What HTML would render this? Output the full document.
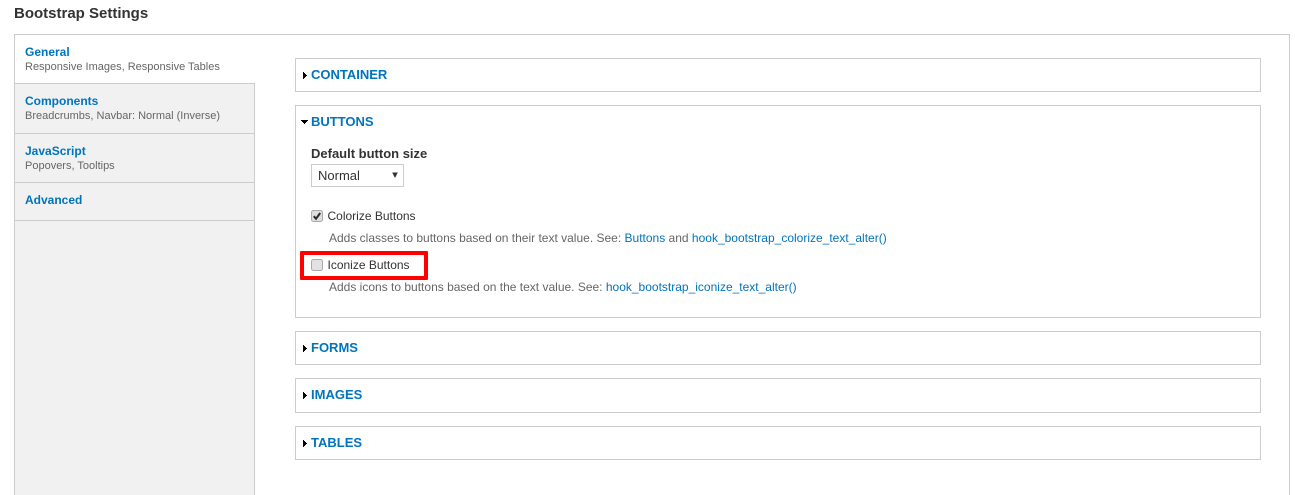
<!DOCTYPE html>
<html>
<head>
<meta charset="utf-8">
<style>
html,body{margin:0;padding:0;background:#fff;width:1295px;height:495px;overflow:hidden;}
#w{position:relative;width:1295px;height:495px;overflow:hidden;font-family:"Liberation Sans",sans-serif;color:#333;}
.a{position:absolute;white-space:nowrap;}
.box{position:absolute;box-sizing:border-box;border:1px solid #ccc;}
.l{color:#0074bd;text-decoration:none;}
.tt{font-size:12px;font-weight:bold;color:#0074bd;line-height:14px;left:25px;}
.ts{font-size:11px;color:#666;line-height:13px;left:25px;}
.div{position:absolute;left:15px;width:240px;height:1px;background:#ccc;}
.leg{font-size:13px;font-weight:bold;color:#0074bd;line-height:15px;left:311px;}
.d{font-size:12px;color:#666;line-height:14px;left:329px;}
.cb{font-size:12px;color:#333;line-height:14px;left:327.5px;}
svg{position:absolute;display:block;}
</style>
</head>
<body>
<div id="w">
<div class="a" style="left:14px;top:5px;font-size:15px;font-weight:bold;line-height:17px;color:#333;">Bootstrap Settings</div>

<div class="a" style="left:14px;top:34px;width:1276px;height:461px;box-sizing:border-box;border:1px solid #ccc;border-bottom:0;"></div>
<div class="a" style="left:15px;top:84px;width:239px;height:411px;background:#f1f1f1;"></div>
<div class="a" style="left:254px;top:83px;width:1px;height:412px;background:#ccc;"></div>
<div class="div" style="top:83px;"></div>
<div class="div" style="top:133px;"></div>
<div class="div" style="top:182px;"></div>
<div class="div" style="top:220px;"></div>

<div class="a tt" style="top:45px;">General</div>
<div class="a ts" style="top:61px;">Responsive Images, Responsive Tables</div>
<div class="a tt" style="top:94px;">Components</div>
<div class="a ts" style="top:110px;">Breadcrumbs, Navbar: Normal (Inverse)</div>
<div class="a tt" style="top:144px;">JavaScript</div>
<div class="a ts" style="top:160px;">Popovers, Tooltips</div>
<div class="a tt" style="top:193px;">Advanced</div>

<div class="box" style="left:295px;top:58px;width:966px;height:34px;"></div>
<div class="box" style="left:295px;top:105px;width:966px;height:213px;"></div>
<div class="box" style="left:295px;top:331px;width:966px;height:34px;"></div>
<div class="box" style="left:295px;top:378px;width:966px;height:35px;"></div>
<div class="box" style="left:295px;top:426px;width:966px;height:34px;"></div>

<svg style="left:303px;top:72px;" width="5" height="8" shape-rendering="crispEdges"><path d="M0 0H1V1H2V2H3V3H4V4H3V5H2V6H1V7H0Z" fill="#000"/></svg>
<div class="a leg" style="top:67px;">CONTAINER</div>
<svg style="left:301px;top:120px;" width="8" height="5" shape-rendering="crispEdges"><path d="M0 0H7V1H6V2H5V3H4V4H3V3H2V2H1V1H0Z" fill="#000"/></svg>
<div class="a leg" style="top:114px;">BUTTONS</div>
<svg style="left:303px;top:345px;" width="5" height="8" shape-rendering="crispEdges"><path d="M0 0H1V1H2V2H3V3H4V4H3V5H2V6H1V7H0Z" fill="#000"/></svg>
<div class="a leg" style="top:340px;">FORMS</div>
<svg style="left:303px;top:392px;" width="5" height="8" shape-rendering="crispEdges"><path d="M0 0H1V1H2V2H3V3H4V4H3V5H2V6H1V7H0Z" fill="#000"/></svg>
<div class="a leg" style="top:387px;">IMAGES</div>
<svg style="left:303px;top:440px;" width="5" height="8" shape-rendering="crispEdges"><path d="M0 0H1V1H2V2H3V3H4V4H3V5H2V6H1V7H0Z" fill="#000"/></svg>
<div class="a leg" style="top:435px;">TABLES</div>

<div class="a" style="left:311px;top:146px;font-size:13px;font-weight:bold;line-height:15px;color:#333;">Default button size</div>
<div class="box" style="left:311px;top:164px;width:93px;height:23px;"></div>
<div class="a" style="left:318px;top:168px;font-size:13px;line-height:15px;color:#333;">Normal</div>
<svg style="left:392px;top:172px;" width="7" height="7"><path d="M0.200 0.500H5.800L3 6Z" fill="#333"/></svg>

<svg style="left:311px;top:210px;" width="13" height="13"><rect x="0.500" y="0.500" width="11" height="11" rx="2" fill="#dedede" stroke="#aaa"/><path d="M2.800 6.200L5 8.800L9.200 3" fill="none" stroke="#2b2b2b" stroke-width="2"/></svg>
<div class="a cb" style="top:209px;">Colorize Buttons</div>
<div class="a d" style="top:231px;">Adds classes to buttons based on their text value. See: <a class="l">Buttons</a> and <a class="l">hook_bootstrap_colorize_text_alter()</a></div>

<div class="a" style="left:300px;top:251px;width:128px;height:29px;box-sizing:border-box;border:4px solid #f00;border-radius:1px;"></div>
<svg style="left:311px;top:259px;" width="13" height="13"><rect x="0.500" y="0.500" width="11" height="11" rx="2" fill="#e2e2e2" stroke="#aaa"/></svg>
<div class="a cb" style="top:258px;">Iconize Buttons</div>
<div class="a d" style="top:280px;">Adds icons to buttons based on the text value. See: <a class="l">hook_bootstrap_iconize_text_alter()</a></div>
</div>
</body>
</html>
